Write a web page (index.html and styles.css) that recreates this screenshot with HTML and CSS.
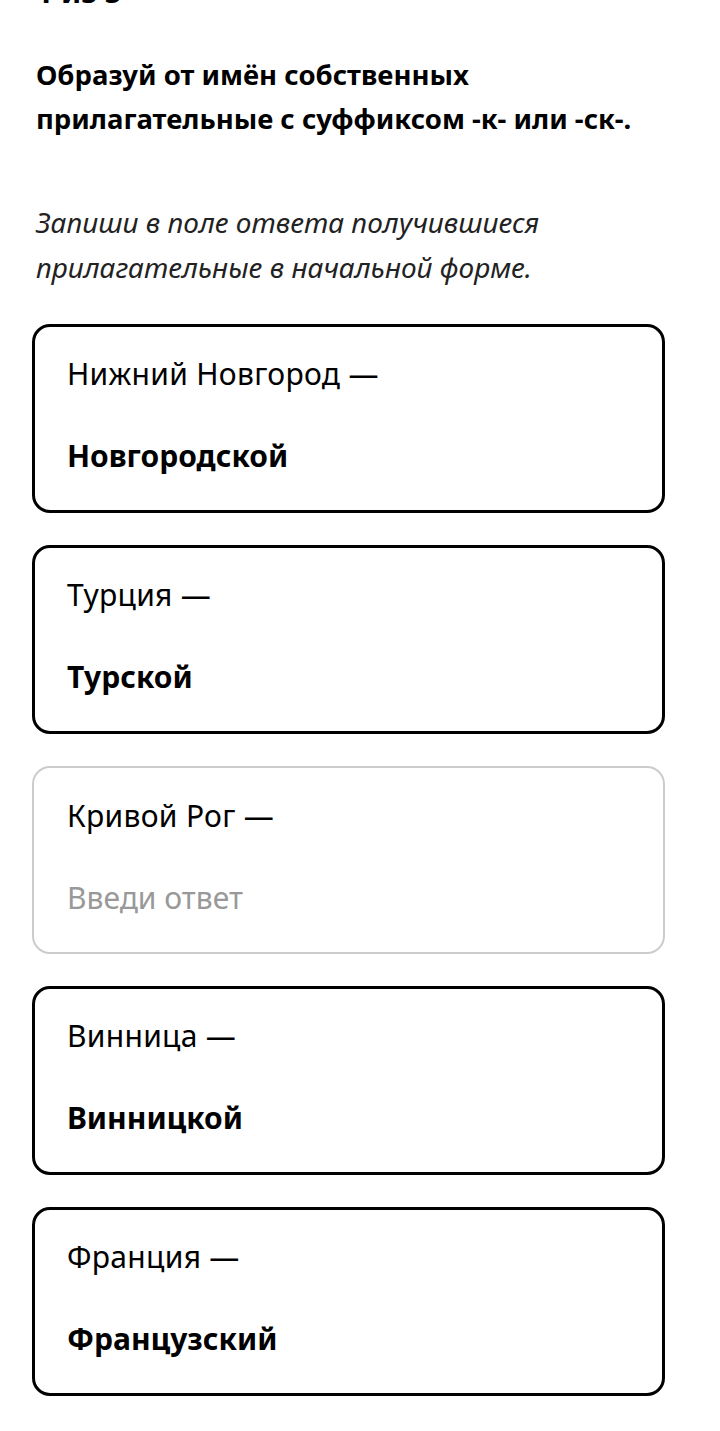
FILE: index.html
```html
<!DOCTYPE html>
<html lang="ru">
<head>
    <meta charset="UTF-8">
    <meta name="viewport" content="width=device-width, initial-scale=1.0">
    <title>Задание 1 из 5</title>
    <link rel="stylesheet" href="styles.css">
</head>
<body>
    <div class="page">
        <div class="counter">1 из 5</div>

        <h1 class="task-title">Образуй от имён собственных прилагательные с суффиксом -к- или -ск-.</h1>

        <p class="task-hint">Запиши в поле ответа получившиеся прилагательные в начальной форме.</p>

        <div class="answers">
            <div class="answer-box">
                <div class="answer-label">Нижний Новгород —</div>
                <div class="answer-value">Новгородской</div>
            </div>

            <div class="answer-box">
                <div class="answer-label">Турция —</div>
                <div class="answer-value">Турской</div>
            </div>

            <div class="answer-box empty">
                <div class="answer-label">Кривой Рог —</div>
                <div class="answer-value placeholder">Введи ответ</div>
            </div>

            <div class="answer-box">
                <div class="answer-label">Винница —</div>
                <div class="answer-value">Винницкой</div>
            </div>

            <div class="answer-box">
                <div class="answer-label">Франция —</div>
                <div class="answer-value">Французский</div>
            </div>
        </div>
    </div>
</body>
</html>
```

FILE: styles.css
```css
body {
    font-family: "Noto Sans", Arial, sans-serif;
    margin: 0;
    padding: 0;
    background-color: #ffffff;
    color: #000000;
}

.page {
    padding: 0 36px 0 36px;
}

.counter {
    font-size: 30px;
    font-weight: bold;
    line-height: 30px;
    margin-top: -23px;
}

.task-title {
    font-size: 27.5px;
    font-weight: bold;
    line-height: 44px;
    margin: 46px 0 0 0;
    max-width: 620px;
}

.task-hint {
    font-size: 28px;
    font-style: italic;
    line-height: 45px;
    margin: 59px 0 0 0;
    color: #222;
}

.answers {
    display: flex;
    flex-direction: column;
    gap: 32px;
    margin: 34px 0 0 -4px;
    width: 633px;
}

.answer-box {
    height: 189px;
    box-sizing: border-box;
    border: 3px solid #000;
    border-radius: 18px;
    padding: 28px 0 0 32px;
}

.answer-box.empty {
    border: 2px solid #cccccc;
    padding: 29px 0 0 33px;
    height: 188px;
}

.answer-label {
    font-size: 30px;
    line-height: 38px;
    letter-spacing: 0.3px;
}

.answer-value {
    font-size: 30px;
    font-weight: bold;
    line-height: 38px;
    margin-top: 44px;
}

.answer-value.placeholder {
    font-weight: normal;
    color: #999999;
}
```
